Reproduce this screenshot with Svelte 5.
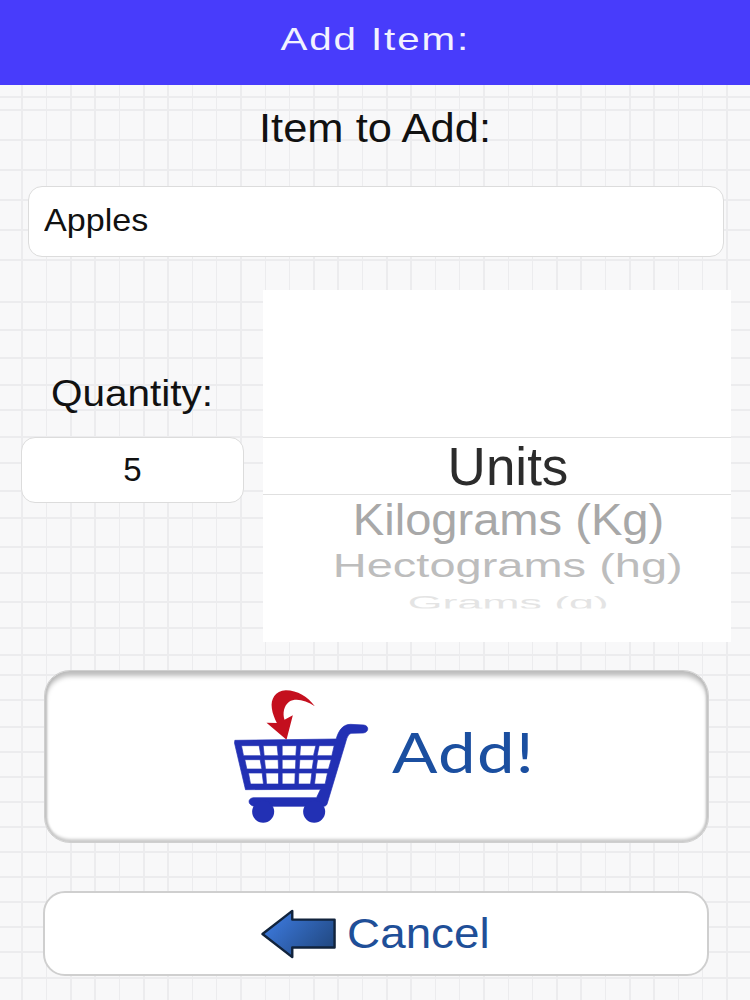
<script>
  const units = [
    { label: 'Kilograms (Kg)', cls: 'near' },
    { label: 'Hectograms (hg)', cls: 'mid' },
    { label: 'Grams (g)', cls: 'far' }
  ];

  const rows = [
    [[125,258,178,258,183,288,131,288],[190,258,232,258,235,288,193,288],[247,258,290,258,288,288,247,288],[302,258,348,258,341,288,300,288],[358,258,403,258,396,288,352,288]],
    [[135,300,181,300,186,328,141,328],[194,300,235,300,236,328,197,328],[247,300,288,300,287,328,247,328],[300,300,341,300,337,328,298,328],[353,300,394,300,386,328,349,328]],
    [[146,340,187,340,191,373,152,373],[198,340,236,340,236,373,200,373],[247,340,286,340,285,373,247,373],[297,340,336,340,332,373,296,373],[348,340,383,340,376,373,344,373]]
  ];

  // the paper's ruled lines are not evenly spaced, they tighten towards the bottom
  const ruled = [97, 110, 140, 170, 200, 230, 260, 302, 330, 358, 385, 410, 437, 463, 491, 518, 547, 573, 602, 628, 655, 675, 700, 727, 752, 777, 802, 827, 852, 877, 902, 927, 952, 978];
  const lineColor = '#ececee';
  const stops = ruled
    .map((y) => `transparent ${y - 0.75}px, ${lineColor} ${y - 0.75}px ${y + 0.75}px, transparent ${y + 0.75}px`)
    .join(', ');
  const paper = `background-image: linear-gradient(180deg, ${stops}), repeating-linear-gradient(90deg, transparent 0 21.5px, ${lineColor} 21.5px 23px, transparent 23px 24.3px)`;
</script>

<div class="page" style={paper}>
  <header class="bar"><span class="bar-title">Add Item:</span></header>

  <main class="form">
    <h2 class="item-label">Item to Add:</h2>
    <div class="field item-field"><span class="wide-left">Apples</span></div>

    <div class="middle">
      <div class="qty">
        <div class="qty-label"><span class="wide-left">Quantity:</span></div>
        <div class="field qty-field">5</div>
      </div>
      <div class="picker">
        <div class="picker-top"></div>
        <div class="picker-sel">Units</div>
        <div class="picker-rest">
          {#each units as u}
            <div class="opt {u.cls}">{u.label}</div>
          {/each}
        </div>
      </div>
    </div>

    <button class="btn add">
      <svg class="cart" viewBox="100 85 410 405" width="137" height="135">
        <path class="red" d="M345 140C325 112 292 92 258 92C226 94 212 118 216 146C218 162 224 176 231 190L200 189L260 240L279 167L254 180C248 160 252 138 268 126C288 114 318 122 345 140Z" />
        <path class="blue frame" d="M105 242L409 238C416 214 428 194 452 194L492 196C508 198 508 218 490 220L456 221C446 222 442 232 438 246L382 432C380 438 376 440 370 440L165 440C146 438 140 418 160 414L350 414L362 389L137 390L104 250Z" />
        {#each rows as row}
          {#each row as cell}
            <polygon class="hole" points={cell.join(' ')} />
          {/each}
        {/each}
        <circle class="blue" cx="190" cy="456" r="33" />
        <circle class="blue" cx="343" cy="456" r="33" />
      </svg>
      <span class="add-text">Add!</span>
    </button>

    <button class="btn cancel">
      <svg class="back" viewBox="0 0 80 52" width="78" height="50">
        <defs>
          <linearGradient id="backfill" x1="0" y1="0" x2="1" y2="0.6">
            <stop offset="0" stop-color="#4080ea" />
            <stop offset="1" stop-color="#234c88" />
          </linearGradient>
        </defs>
        <path d="M2 26L33 2V11H77V40H33V50Z" fill="url(#backfill)" stroke="#11233c" stroke-width="2.5" stroke-linejoin="round" />
      </svg>
      <span class="cancel-text">Cancel</span>
    </button>
  </main>
</div>

<style>
  :global(body) {
    margin: 0;
    background: #f8f8f8;
  }

  .page {
    width: 750px;
    height: 1000px;
    overflow: hidden;
    font-family: 'Liberation Sans', Arial, sans-serif;
    color: #111;
    background-color: #f8f8f9;
  }

  .bar {
    height: 85px;
    background: #483cfb;
    color: #f2f2ff;
    display: flex;
    align-items: center;
    justify-content: center;
    padding-bottom: 7px;
    box-sizing: border-box;
  }

  .bar-title {
    font-size: 32px;
    letter-spacing: 1.5px;
    transform: scaleX(1.26);
  }

  .form {
    display: flex;
    flex-direction: column;
  }

  .item-label {
    margin: 20px 0 0;
    font-size: 41px;
    font-weight: 400;
    line-height: 46px;
    text-align: center;
    transform: scaleX(1.06);
  }

  .wide-left {
    display: inline-block;
    transform: scaleX(1.065);
    transform-origin: left center;
  }

  .field {
    background: #fff;
    border: 1.5px solid #dcdcdc;
    border-radius: 14px;
    box-sizing: border-box;
    font-size: 32px;
    display: flex;
    align-items: center;
  }

  .item-field {
    margin: 35px 26px 0 28px;
    height: 71px;
    padding-left: 15px;
    padding-bottom: 2px;
  }

  .middle {
    display: flex;
    margin-top: 33px;
    padding-left: 21px;
  }

  .qty {
    width: 223px;
    padding-top: 81px;
  }

  .qty-label {
    font-size: 36px;
    line-height: 46px;
    padding-left: 30px;
  }

  .qty-label .wide-left {
    transform: scaleX(1.125);
  }

  .qty-field {
    margin-top: 20px;
    height: 66px;
    justify-content: center;
    font-size: 33px;
  }

  .picker {
    margin-left: 19px;
    width: 468px;
    height: 352px;
    background: #fff;
    overflow: hidden;
    text-align: center;
  }

  .picker-top {
    height: 147px;
  }

  .picker-sel {
    height: 58px;
    box-sizing: border-box;
    border-top: 1.5px solid #e0e0e0;
    border-bottom: 1.5px solid #e0e0e0;
    padding-left: 22px;
    font-size: 53px;
    line-height: 57px;
    color: #2c2c2c;
  }

  .picker-rest {
    display: flex;
    flex-direction: column;
    align-items: center;
    padding-left: 22px;
  }

  .opt {
    white-space: nowrap;
  }

  .near {
    margin-top: 2px;
    font-size: 44px;
    line-height: 46px;
    color: #a8a8a8;
    transform: scaleX(1.07);
  }

  .mid {
    margin-top: 3px;
    font-size: 37px;
    line-height: 40px;
    color: #bdbdbd;
    transform: scaleX(1.27) scaleY(0.88);
  }

  .far {
    margin-top: -1px;
    font-size: 29px;
    line-height: 34px;
    color: #e4e4e4;
    transform: scaleX(1.54) scaleY(0.66);
    clip-path: inset(0 0 7px 0);
  }

  .btn {
    display: flex;
    align-items: center;
    justify-content: center;
    padding: 0;
    background: #fff;
    font-family: inherit;
    box-sizing: border-box;
  }

  .add {
    margin: 28px 41px 0 44px;
    height: 173px;
    border: 1px solid #cfcfcf;
    border-radius: 26px;
    box-shadow: inset 0 5px 5px #bcbcbc, inset 0 -3px 3px #cccccc, inset 2px 0 2px #c8c8c8, inset -2px 0 2px #c8c8c8;
    gap: 34px;
  }

  .cart {
    margin-bottom: 2px;
    margin-left: 4px;
  }

  .red { fill: #c40f1e; }
  .blue { fill: #2230b4; }
  .frame {
    stroke: #2230b4;
    stroke-width: 2;
  }
  .hole {
    fill: #fff;
    stroke: #2230b4;
    stroke-width: 2;
  }

  .add-text {
    font-family: Lato, 'Liberation Sans', sans-serif;
    font-size: 56px;
    color: #1b4fa0;
    letter-spacing: 1px;
    margin-bottom: 10px;
    transform: scaleX(1.2);
  }

  .cancel {
    margin: 48px 41px 0 43px;
    height: 85px;
    border: 2px solid #cfcfcf;
    border-radius: 22px;
    gap: 15px;
    padding-right: 8px;
  }

  .cancel-text {
    font-size: 42px;
    color: #1f4f98;
    transform: scaleX(1.09);
  }
</style>
